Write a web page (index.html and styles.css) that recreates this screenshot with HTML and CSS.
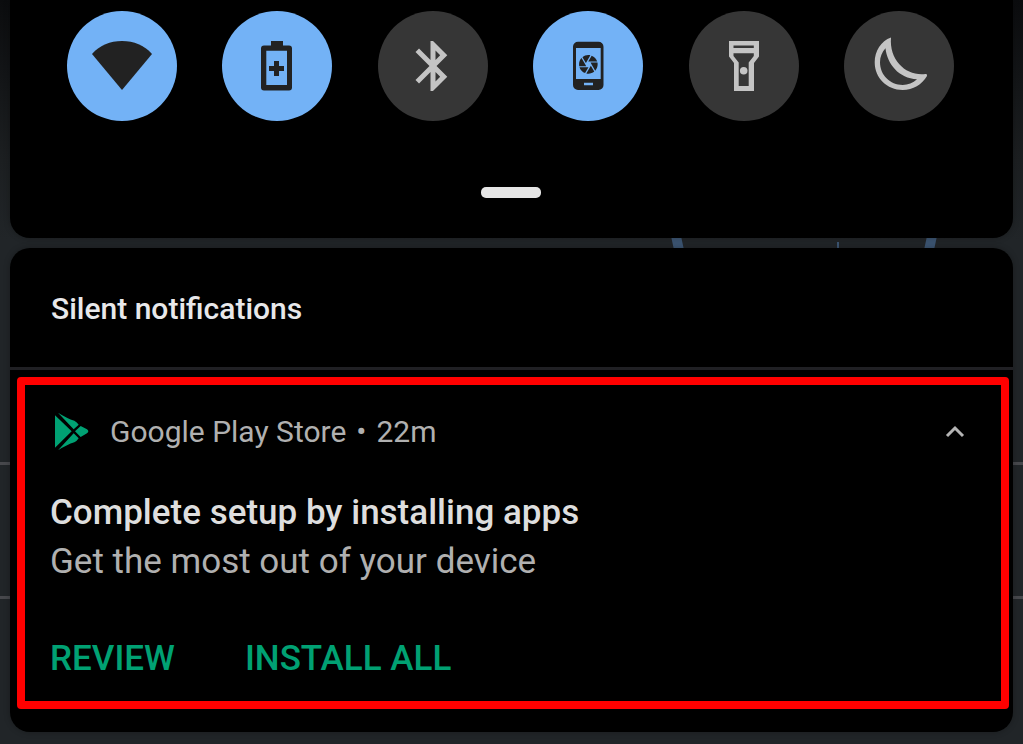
FILE: index.html
```html
<!DOCTYPE html>
<html lang="en">
<head>
<meta charset="utf-8">
<title>Notification shade</title>
<link rel="stylesheet" href="styles.css">
</head>
<body>
<svg class="backdrop" aria-hidden="true">
  <path d="M671 236h10l3 14h-10z M927 236h10l-3 14h-10z M837 242h2v8h-2z"/>
</svg>
<main class="shade">
  <section class="quick-settings" aria-label="Quick settings">
    <div class="tiles">
      <button class="tile tile-on" aria-label="Wi-Fi">
        <svg viewBox="0 0 110 110"><path d="M25 43C33 34 43 30 55 30S77 34 85 43L55 79Z"/></svg>
      </button>
      <button class="tile tile-on" aria-label="Battery saver">
        <svg viewBox="0 0 110 110"><path fill-rule="evenodd" d="M49 30h12v4.500h6a3 3 0 0 1 3 3v39a3 3 0 0 1-3 3H42a3 3 0 0 1-3-3v-39a3 3 0 0 1 3-3h7zM44.300 39.700V74H65V39.700z"/><path d="M52 50h5v5h5v5h-5v5h-5v-5h-5v-5h5z"/></svg>
      </button>
      <button class="tile" aria-label="Bluetooth">
        <svg viewBox="0 0 110 110"><path transform="translate(25 25) scale(2.5)" d="M17.710 7.710L12 2h-1v7.590L6.410 5 5 6.410 10.590 12 5 17.590 6.410 19 11 14.410V22h1l5.710-5.710-4.300-4.290 4.300-4.290zM13 5.830l1.880 1.880L13 9.590V5.830zm1.880 10.460L13 18.170v-3.760l1.880 1.880z"/></svg>
      </button>
      <button class="tile tile-on" aria-label="Auto-rotate">
        <svg viewBox="0 0 110 110"><path fill-rule="evenodd" d="M45 30.700h20.500a5 5 0 0 1 5 5V74a5 5 0 0 1-5 5H45a5 5 0 0 1-5-5V35.700a5 5 0 0 1 5-5zM43 37v31h24.700V37zM51 71.700v2.600h9v-2.600z"/><path transform="translate(44.2 42.200) scale(.93)" d="M9.400 10.500l4.770-8.260C13.470 2.090 12.750 2 12 2c-2.400 0-4.600.85-6.320 2.250l3.660 6.350.06-.1zM21.540 9c-.92-2.920-3.150-5.260-6-6.340L11.880 9h9.660zm.26 1h-7.490l.29.5 4.760 8.250C21 16.970 22 14.610 22 12c0-.69-.07-1.350-.2-2zM8.540 12l-3.900-6.750C3.010 7.030 2 9.390 2 12c0 .69.07 1.350.2 2h7.490l-1.150-2zm-6.080 3c.92 2.920 3.150 5.260 6 6.340L12.120 15H2.460zm11.270 0l-3.900 6.760c.7.15 1.420.24 2.170.24 2.400 0 4.600-.85 6.320-2.250l-3.660-6.350-.93 1.600z"/></svg>
      </button>
      <button class="tile" aria-label="Flashlight">
        <svg viewBox="0 0 110 110"><path fill-rule="evenodd" d="M40 30h30v15.500L65 52v28H45V52l-5-6.500zM44.500 34.500V37h20.300v-2.500zM44.500 42.300V45l5.200 6.500V75h10V51.500l5.100-6.500v-2.700z"/><circle cx="54.700" cy="59.700" r="3.800"/></svg>
      </button>
      <button class="tile" aria-label="Do not disturb">
        <svg viewBox="0 0 110 110"><path fill-rule="evenodd" d="M47 26.500C37 30 30.700 40 30.700 51.300 30.700 67 43 79 58.700 79 69 79 78 73.500 83 65Q83.500 62.700 81.500 63C63 65.500 45 50 47 26.500zM41.500 37.300C43 53 55 67.500 73 68.300 69 72 64 74 58.700 74 46 74 36 64 36 51.300 36 46 38 41 41.500 37.300z"/></svg>
      </button>
    </div>
    <div class="handle"></div>
  </section>
  <section class="silent">
    <h1 class="silent-title">Silent notifications</h1>
    <article class="notification">
      <header class="notification-header">
        <svg class="play-icon" viewBox="45 34 108 120" aria-hidden="true"><path d="M48 44L98 92 48 141zM57 36Q84 53 106 60Q114 64 119 72L104 86zM125 76L144 86Q152 92 144 98L125 109 108 92zM57 149Q84 132 106 125Q114 121 119 113L104 98z"/></svg>
        <p class="source"><span>Google Play Store</span><span>•</span><span>22m</span></p>
        <button class="collapse" aria-label="Collapse"><svg viewBox="0 0 20 20"><path d="M2 14l8-8 8 8"/></svg></button>
      </header>
      <h2 class="notification-title">Complete setup by installing apps</h2>
      <p class="notification-text">Get the most out of your device</p>
      <div class="actions">
        <button class="action">REVIEW</button>
        <button class="action">INSTALL ALL</button>
      </div>
    </article>
  </section>
</main>
</body>
</html>
```
FILE: styles.css
```css
* { box-sizing: border-box; }
body {
  position: relative;
  min-height: 100vh;
  margin: 0;
  background:
    linear-gradient(#47484c, #47484c) 0 462px / 100% 3px no-repeat,
    linear-gradient(#47484c, #47484c) 0 596px / 100% 3px no-repeat,
    linear-gradient(#0b0c0e, #1c1f21 160px, #212528 240px);
  font-family: Roboto, "Liberation Sans", sans-serif;
  color: #e8e8ea;
}
button {
  padding: 0;
  border: 0;
  background: none;
  font: inherit;
}
.backdrop {
  position: absolute;
  inset: 0;
  width: 100%;
  height: 100%;
  fill: #3c5471;
}
.shade {
  position: relative;
  display: flex;
  flex-direction: column;
  gap: 10px;
  padding: 0 10px 12px;
}
.quick-settings {
  padding: 11px 59px 40px 57px;
  border-radius: 0 0 20px 20px;
  background: #000;
  box-shadow: 0 0 6px #0004;
}
.tiles {
  display: flex;
  justify-content: space-between;
}
.tile {
  width: 110px;
  height: 110px;
  border-radius: 50%;
  background: #363636;
  fill: #c4c4c4;
}
.tile-on {
  background: #73b2f6;
  fill: #222;
}
.tile svg { display: block; }
.handle {
  width: 60px;
  height: 11px;
  margin: 66px auto 0;
  border-radius: 5px;
  background: #e6e6e6;
}
.silent {
  padding-bottom: 23px;
  border-radius: 20px;
  background: #000;
  box-shadow: 0 0 6px #0004;
}
.silent-title {
  margin: 0;
  padding: 41px 41px 38px;
  border-bottom: 3px solid #202024;
  font-size: 30px;
  font-weight: 500;
  line-height: 40px;
}
.notification {
  margin: 7px 4px 0 7px;
  padding: 27px 36px 18px 25px;
  border: 8px solid #f00;
  border-radius: 4px;
}
.notification-header {
  display: flex;
  align-items: center;
  gap: 20px;
  padding-left: 4px;
  color: #b0b0b0;
  font-size: 30px;
  line-height: 40px;
}
.source {
  display: flex;
  gap: 10px;
  margin: 0;
}
.play-icon {
  width: 36px;
  height: 40px;
  fill: #00a173;
}
.collapse {
  width: 20px;
  height: 20px;
  margin-left: auto;
}
.collapse svg {
  display: block;
  fill: none;
  stroke: #b4b4b4;
  stroke-width: 3;
}
.notification-title {
  margin: 36px 0 0;
  color: #dedede;
  font-size: 35px;
  font-weight: 500;
  line-height: 49px;
}
.notification-text {
  margin: 0;
  color: #b0b0b0;
  font-size: 35px;
  line-height: 49px;
}
.actions {
  display: flex;
  gap: 70px;
  margin-top: 49px;
}
.action {
  color: #00a173;
  font-size: 35px;
  font-weight: 500;
  line-height: 48px;
}
```
